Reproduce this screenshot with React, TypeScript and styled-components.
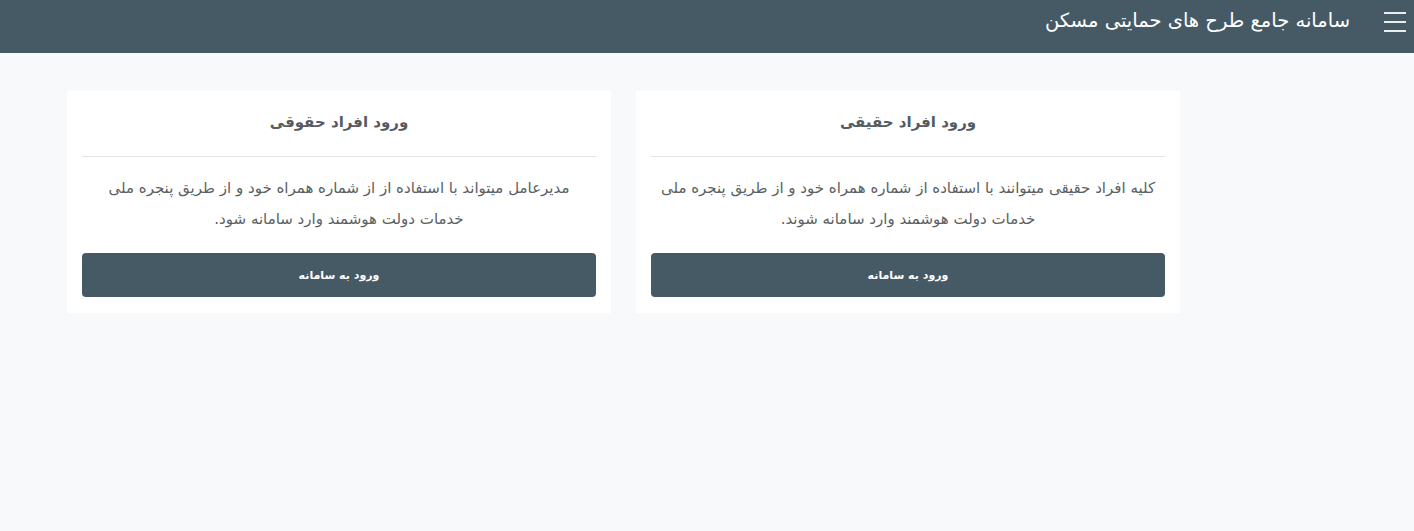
import React from "react";
import styled, { createGlobalStyle } from "styled-components";

const GlobalStyle = createGlobalStyle`
  html, body {
    margin: 0;
    padding: 0;
    background: #f8f9fb;
    font-family: "DejaVu Sans", "Noto Sans", sans-serif;
  }
`;

const Page = styled.div`
  direction: rtl;
  min-height: 531px;
  background: #f8f9fb;
`;

const Header = styled.header`
  height: 53px;
  background: #465a66;
  display: flex;
  align-items: flex-start;
  padding: 0 8px 0 0;
  box-sizing: border-box;
`;

const MenuButton = styled.button`
  width: 22px;
  height: 20px;
  margin-top: 12px;
  padding: 0;
  border: 0;
  background: transparent;
  display: flex;
  flex-direction: column;
  justify-content: space-between;
  cursor: pointer;

  span {
    display: block;
    height: 2px;
    background: #e9edf0;
  }
`;

const Brand = styled.h1`
  margin: 9px 34px 0 0;
  font-size: 19.5px;
  font-weight: 400;
  color: #ffffff;
  white-space: nowrap;
`;

const Cards = styled.main`
  display: grid;
  grid-template-columns: 544px 544px;
  gap: 25px;
  padding: 38px 234px 0 68px;
`;

const Card = styled.section`
  background: #ffffff;
  padding: 0 15px 16px;
  display: flex;
  flex-direction: column;
`;

const CardTitle = styled.h2`
  margin: 0;
  height: 66px;
  padding-bottom: 4px;
  box-sizing: border-box;
  display: flex;
  align-items: center;
  justify-content: center;
  font-size: 15px;
  font-weight: 700;
  color: #555b60;
  border-bottom: 1px solid #e2e4e7;
`;

const CardText = styled.p`
  margin: 16px 0 18px;
  padding: 0 5px;
  font-size: 15px;
  line-height: 31px;
  color: #5a5f63;
  text-align: center;
`;

const EnterButton = styled.button`
  height: 44px;
  border: 0;
  border-radius: 4px;
  background: #465a66;
  color: #ffffff;
  font-family: inherit;
  font-size: 11px;
  font-weight: 700;
  cursor: pointer;
`;

const cards = [
  {
    id: "real",
    title: "ورود افراد حقیقی",
    text: "کلیه افراد حقیقی میتوانند با استفاده از شماره همراه خود و از طریق پنجره ملی خدمات دولت هوشمند وارد سامانه شوند.",
  },
  {
    id: "legal",
    title: "ورود افراد حقوقی",
    text: "مدیرعامل میتواند با استفاده از از شماره همراه خود و از طریق پنجره ملی خدمات دولت هوشمند وارد سامانه شود.",
  },
];

const App = () => (
  <>
    <GlobalStyle />
    <Page>
      <Header>
        <MenuButton aria-label="منو">
          <span />
          <span />
          <span />
        </MenuButton>
        <Brand>سامانه جامع طرح های حمایتی مسکن</Brand>
      </Header>
      <Cards>
        {cards.map((card) => (
          <Card key={card.id}>
            <CardTitle>{card.title}</CardTitle>
            <CardText>{card.text}</CardText>
            <EnterButton>ورود به سامانه</EnterButton>
          </Card>
        ))}
      </Cards>
    </Page>
  </>
);

export default App;
